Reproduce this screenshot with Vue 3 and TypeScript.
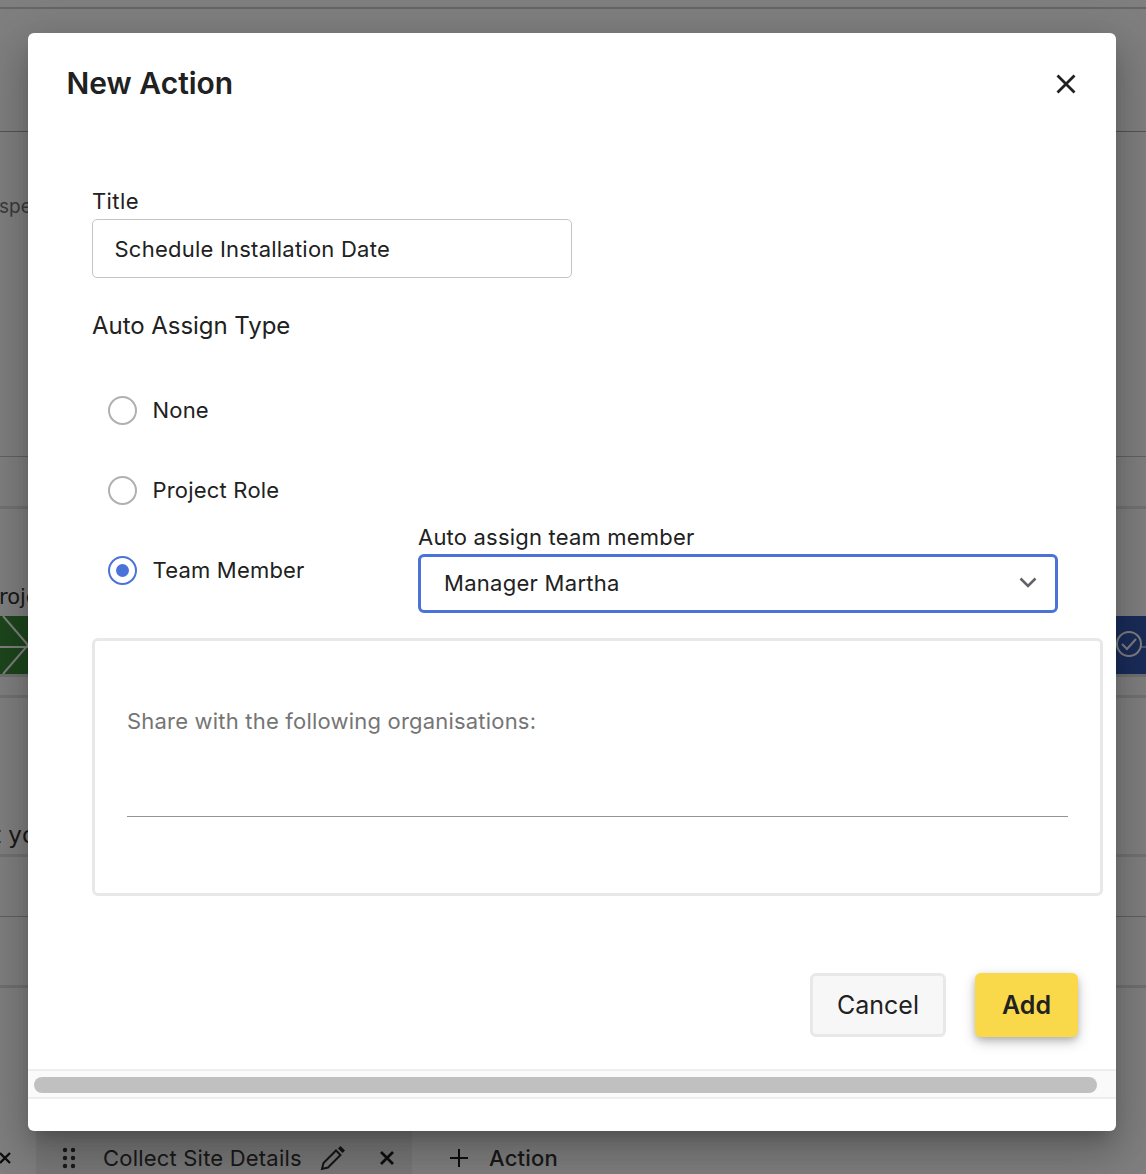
<script setup lang="ts">
import { ref } from 'vue'

const title = ref('Schedule Installation Date')
const assignType = ref('team')
const options = [
  { value: 'none', label: 'None' },
  { value: 'role', label: 'Project Role' },
  { value: 'team', label: 'Team Member' },
]
</script>

<template>
  <div class="page">
    <div class="bg-row r0"></div>
    <div class="bg-row r1"></div>
    <div class="bg-row r2"><span class="bg-text">spe</span></div>
    <div class="bg-row r3"></div>
    <div class="bg-row r4"><span class="bg-text dark">roje</span></div>
    <div class="bg-row r5">
      <div class="green">
        <svg width="28" height="58" viewBox="0 0 28 58"><path d="M3 0L28 29L3 58M0 31H28" fill="none" stroke="#fff" stroke-width="2" /></svg>
      </div>
      <div class="blue">
        <svg width="30" height="58" viewBox="0 0 30 58"><circle cx="13" cy="28" r="12" fill="none" stroke="#fff" stroke-width="2" /><path d="M6 28l5 5 9-10" fill="none" stroke="#fff" stroke-width="2" /><path d="M25 31h5" stroke="#fff" stroke-width="1" /></svg>
      </div>
    </div>
    <div class="bg-row r6"></div>
    <div class="bg-row r7"><span class="bg-text dark yo">t yo</span></div>
    <div class="bg-row r8"></div>
    <div class="bg-row r9"></div>
    <div class="bg-row r10"></div>
    <div class="bg-bottom">
      <div class="first-cell">
        <svg class="x-left" width="12" height="12" viewBox="0 0 12 12"><path d="M1 1l10 10M11 1L1 11" stroke="#1f1f1f" stroke-width="2.400" /></svg>
      </div>
      <div class="action-cell">
        <svg class="grip" width="14" height="22" viewBox="0 0 14 22" fill="#333">
          <circle cx="3" cy="3" r="2.2" /><circle cx="11" cy="3" r="2.2" />
          <circle cx="3" cy="11" r="2.2" /><circle cx="11" cy="11" r="2.2" />
          <circle cx="3" cy="19" r="2.2" /><circle cx="11" cy="19" r="2.2" />
        </svg>
        <span class="action-name">Collect Site Details</span>
        <svg class="pencil" width="26" height="26" viewBox="0 0 26 26"><path d="M2 24l1.500-6L16 5.500l4.500 4.500L8 22.500z" fill="none" stroke="#2a2a2a" stroke-width="2" /><path d="M18 3.500l2.500-2.500 4.500 4.500L22.500 8z" fill="#2a2a2a" /></svg>
        <svg class="x-mid" width="16" height="16" viewBox="0 0 16 16"><path d="M2 2l12 12M14 2L2 14" stroke="#1f1f1f" stroke-width="2.800" /></svg>
      </div>
      <div class="add-cell">
        <svg width="20" height="20" viewBox="0 0 20 20"><path d="M10 1v18M1 10h18" stroke="#1f1f1f" stroke-width="2" /></svg>
        <span class="add-name">Action</span>
      </div>
    </div>

    <div class="backdrop"></div>

    <section class="modal">
      <header class="modal-head">
        <h1>New Action</h1>
        <button class="close" aria-label="Close">
          <svg width="20" height="20" viewBox="0 0 20 20"><path d="M1.500 1.500l17 17M18.500 1.500l-17 17" stroke="#212121" stroke-width="2.800" /></svg>
        </button>
      </header>

      <div class="form">
        <label class="field-label">Title</label>
        <input v-model="title" class="text-input" />
        <div class="section-label">Auto Assign Type</div>

        <div class="assign">
          <div class="radios">
            <label v-for="o in options" :key="o.value" class="radio">
              <span class="dot" :class="{ on: assignType === o.value }" @click="assignType = o.value"></span>
              <span>{{ o.label }}</span>
            </label>
          </div>
          <div class="select-wrap">
            <div class="select-label">Auto assign team member</div>
            <div class="select">
              <span class="select-value">Manager Martha</span>
              <svg class="chevron" width="18" height="11" viewBox="0 0 18 11"><path d="M1.500 1.500L9 9l7.500-7.500" fill="none" stroke="#63636b" stroke-width="2.600" /></svg>
            </div>
          </div>
        </div>

        <div class="share">
          <div class="share-label">Share with the following organisations:</div>
          <div class="share-line"></div>
        </div>
      </div>

      <footer class="actions">
        <button class="btn cancel">Cancel</button>
        <button class="btn add">Add</button>
      </footer>

      <div class="scrollbar"><div class="thumb"></div></div>
    </section>
  </div>
</template>

<style>
html, body { margin: 0; padding: 0; }
</style>

<style scoped>
* { box-sizing: border-box; }
.page {
  position: relative;
  width: 1146px;
  height: 1174px;
  overflow: hidden;
  background: #fff;
  font-family: Inter, "Liberation Sans", sans-serif;
  color: #212121;
  display: flex;
  flex-direction: column;
}
.bg-row { flex: none; position: relative; display: flex; }
.r0 { height: 9px; border-bottom: 2px solid #ccc; }
.r1 { height: 123px; border-bottom: 1px solid #a8a8a8; }
.r2 { height: 325px; border-bottom: 1px solid #c4c4c4; padding-top: 63px; }
.r3 { height: 52px; border-bottom: 3px solid #e4e4e4; }
.r4 { height: 107px; padding-top: 76px; }
.r5 { height: 58px; justify-content: space-between; background: #fff; }
.r6 { height: 24px; border-top: 3px solid #e0e0e0; border-bottom: 3px solid #e4e4e4; }
.r7 { height: 159px; border-bottom: 3px solid #e4e4e4; padding-top: 125px; }
.r8 { height: 60px; border-bottom: 1px solid #c0c0c0; }
.r9 { height: 71px; border-bottom: 3px solid #e0e0e0; }
.r10 { height: 139px; }
.bg-text { font-size: 19px; line-height: 24px; color: #777; margin-left: -1px; }
.bg-text.dark { font-size: 21px; color: #333; margin-left: -1px; font-family: "DejaVu Sans", sans-serif; }
.bg-text.yo { font-size: 23px; margin-left: -8px; }
.green { width: 28px; height: 58px; background: #3a8c38; display: flex; }
.blue { width: 30px; height: 58px; background: #3558b4; display: flex; }
.bg-bottom {
  flex: none;
  height: 62px;
  display: flex;
  align-items: stretch;
  font-size: 22px;
  letter-spacing: 0.2px;
}
.first-cell { width: 36px; position: relative; display: flex; align-items: center; }
.x-left { margin-left: -1px; }
.action-cell {
  width: 376px;
  background: #f0f0f0;
  display: flex;
  align-items: center;
  padding-left: 26px;
}
.action-name { margin-left: 27px; color: #333; }
.pencil { margin-left: 18px; }
.x-mid { margin-left: 33px; }
.add-cell { display: flex; align-items: center; padding-left: 37px; }
.add-name { margin-left: 20px; font-weight: 500; color: #333; }

.backdrop {
  position: absolute;
  inset: 0;
  background: rgba(0, 0, 0, 0.5);
}
.modal {
  position: absolute;
  left: 28px;
  top: 33px;
  width: 1088px;
  height: 1098px;
  background: #fff;
  border-radius: 6px;
  box-shadow: 0 11px 15px -7px rgba(0,0,0,.2), 0 24px 38px 3px rgba(0,0,0,.14), 0 9px 46px 8px rgba(0,0,0,.12);
  display: flex;
  flex-direction: column;
}
.modal-head {
  height: 102px;
  flex: none;
  padding: 32px 28px 0 38.500px;
  display: flex;
  justify-content: space-between;
  align-items: flex-start;
}
.modal-head h1 {
  margin: 0;
  font-size: 30px;
  line-height: 36px;
  font-weight: 600;
  color: #212121;
}
.close { border: 0; background: none; padding: 0; margin: 9px 12px 0 0; width: 20px; height: 20px; display: flex; }
.form { padding: 0 13px 0 64px; flex: none; display: flex; flex-direction: column; letter-spacing: 0.2px; }
.field-label, .section-label, .select-label { color: #212121; font-size: 22px; }
.field-label { line-height: 28px; margin-top: 52px; margin-bottom: 4px; height: 28px; letter-spacing: 0.4px; }
.text-input {
  width: 480px;
  height: 59px;
  flex: none;
  border: 1px solid #c4c4c4;
  border-radius: 5px;
  padding: 0 21.500px;
  font: 400 22px Inter, "Liberation Sans", sans-serif;
  letter-spacing: 0.23px;
  color: #212121;
  outline: none;
}
.section-label { margin-top: 33px; line-height: 30px; font-size: 24px; letter-spacing: -0.05px; }
.assign { display: flex; margin-top: 49px; }
.radios { width: 326px; display: flex; flex-direction: column; gap: 50px; padding: 0 0 0 16px; margin-top: 5px; }
.radio { height: 30px; display: flex; align-items: center; gap: 15.5px; font-size: 22px; color: #212121; }
.dot {
  width: 29px;
  height: 29px;
  border: 2.5px solid #b0b0b0;
  border-radius: 50%;
  position: relative;
  flex: none;
}
.dot.on { border-color: #4a72d9; }
.dot.on::after {
  content: "";
  position: absolute;
  left: 50%;
  top: 50%;
  width: 13px;
  height: 13px;
  margin: -6.500px;
  background: #4a72d9;
  border-radius: 50%;
}
.select-wrap { width: 640px; display: flex; flex-direction: column; margin-top: 134px; }
.select-label { line-height: 28px; margin-top: -1px; margin-bottom: 3px; font-size: 22px; }
.select {
  height: 59px;
  flex: none;
  border: 3px solid #4a72d9;
  border-radius: 6px;
  padding: 0 18px 0 23px;
  display: flex;
  align-items: center;
  justify-content: space-between;
  font-size: 22px;
  letter-spacing: 0.28px;
  color: #212121;
}
.select-value { margin-bottom: 2px; }
.chevron { margin-bottom: 2px; }
.share {
  margin-top: 25px;
  width: 1011px;
  height: 258px;
  border: 3px solid #e8e8e8;
  border-radius: 6px;
  padding: 66px 32px 0;
}
.share-label { font-size: 22px; line-height: 28px; color: #757575; }
.share-line { height: 1px; background: #949494; margin-top: 81px; }
.actions {
  flex: none;
  display: flex;
  justify-content: flex-end;
  gap: 29px;
  padding: 77px 38px 0 0;
}
.btn {
  height: 64px;
  border-radius: 6px;
  font: 500 25px Inter, "Liberation Sans", sans-serif;
  color: #212121;
  padding: 0;
}
.cancel { width: 136px; background: #f7f7f7; border: 3px solid #e8e8e8; font-weight: 400; }
.add { width: 103px; background: #f9d949; border: 0; font-weight: 600; box-shadow: 0 3px 6px rgba(0,0,0,.16), 0 5px 14px rgba(0,0,0,.2); }
.scrollbar {
  margin-top: 32px;
  height: 30px;
  background: #fafafa;
  border-top: 2px solid #eee;
  border-bottom: 2px solid #eee;
  padding: 6px 19px 0 6px;
  flex: none;
}
.thumb { height: 16px; background: #c0c0c0; border-radius: 8px; }
</style>
